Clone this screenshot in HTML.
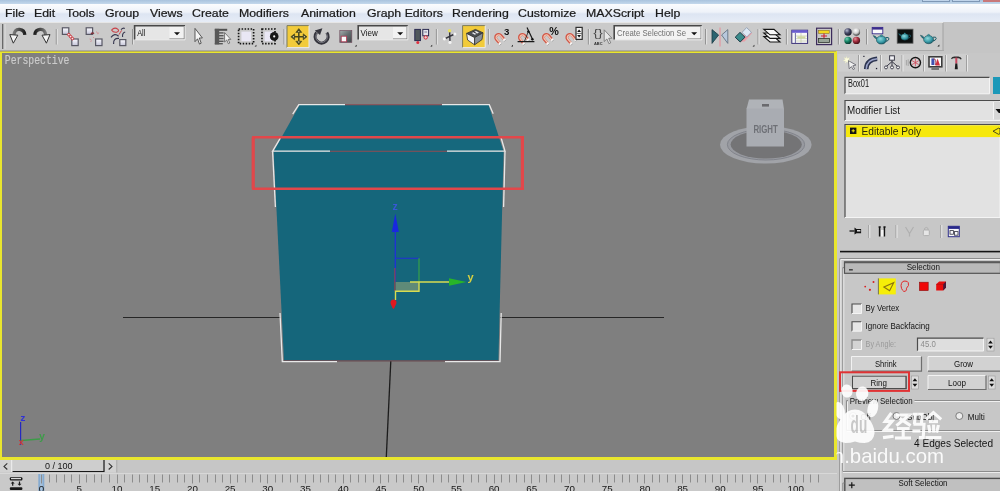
<!DOCTYPE html>
<html><head><meta charset="utf-8">
<style>
html,body{margin:0;padding:0;}
body{width:1000px;height:491px;overflow:hidden;position:relative;background:#c6c6c6;font-family:"Liberation Sans",sans-serif;}
.a{position:absolute;}
svg{will-change:transform;}
#menu{will-change:transform;}
.t{position:absolute;white-space:nowrap;line-height:1;}
#title{left:0;top:0;width:1000px;height:4px;background:linear-gradient(#a9c3de,#c4d8ec);}
#menu{left:0;top:4px;width:1000px;height:18px;background:linear-gradient(#fbfcfe 0%,#eef2f9 45%,#dde5f2 55%,#e6ecf6 100%);}
#menu .t{top:3px;font-size:12.5px;color:#1a1a1a;-webkit-text-stroke:0.25px #1a1a1a;transform:scale(0.985,0.93);transform-origin:0 100%;}
#tb{left:0;top:22px;width:943px;height:27.6px;background:#cacaca;border-top:1px solid #e6e6e6;box-sizing:border-box;}
#tbr{left:943px;top:22px;width:57px;height:31px;background:#c5c5c5;}
#vp{left:0;top:50px;width:836.7px;height:410px;background:#e9e62e;}
#vpt{left:0;top:50.4px;width:836px;height:1.5px;background:#bcb54c;}
#tbb{left:0;top:49.5px;width:943.5px;height:1px;background:#a9a9a9;}
#vpin{left:2.4px;top:53.2px;width:831.9px;height:404.2px;background:#7f7f7f;}
#panel{left:837px;top:53px;width:163px;height:438px;background:#c7c7c7;}
#bot{left:0;top:460px;width:837px;height:31px;background:#c8c8c8;}
</style></head><body>
<div id="title" class="a"></div>
<div class="a" style="left:922px;top:0;width:28px;height:2px;border:1px solid #7e97b5;border-top:none;box-sizing:border-box;background:#c0d4ea"></div><div class="a" style="left:952px;top:0;width:28px;height:2px;border:1px solid #7e97b5;border-top:none;box-sizing:border-box;background:#c0d4ea"></div><div class="a" style="left:983px;top:0;width:17px;height:2px;background:#c8787a"></div>
<div id="menu" class="a">
<span class="t" style="left:5px">File</span>
<span class="t" style="left:34px">Edit</span>
<span class="t" style="left:66px">Tools</span>
<span class="t" style="left:105px">Group</span>
<span class="t" style="left:150px">Views</span>
<span class="t" style="left:192px">Create</span>
<span class="t" style="left:239px">Modifiers</span>
<span class="t" style="left:301px">Animation</span>
<span class="t" style="left:367px">Graph Editors</span>
<span class="t" style="left:452px">Rendering</span>
<span class="t" style="left:518px">Customize</span>
<span class="t" style="left:586px">MAXScript</span>
<span class="t" style="left:655px">Help</span>
</div>
<div id="tb" class="a"></div>
<div id="tbr" class="a"></div>
<div id="vp" class="a"></div>
<div id="vpt" class="a"></div>
<div id="tbb" class="a"></div>
<div id="vpin" class="a"></div>
<svg class="a" style="left:0;top:0" width="1000" height="491" viewBox="0 0 1000 491">
<!-- grid lines -->
<line x1="123" y1="317.5" x2="281" y2="317.5" stroke="#262626" stroke-width="1"/>
<line x1="500" y1="317.5" x2="664" y2="317.5" stroke="#262626" stroke-width="1"/>
<line x1="390.8" y1="361" x2="386.3" y2="457" stroke="#1c1c1c" stroke-width="1.3"/>
<!-- box -->
<polygon points="299.6,105 488.6,105 503.6,151.4 273.6,151.4" fill="#16687d"/>
<polygon points="273.6,151.4 503.6,151.4 498.4,360.4 284,360.4" fill="#15667b"/>
<line x1="284" y1="360.8" x2="498.4" y2="360.8" stroke="#6a4a50" stroke-width="1.2"/>
<!-- selected edges (dark red) -->
<line x1="345" y1="104.8" x2="442" y2="104.8" stroke="#8a4a52" stroke-width="1.1"/>
<line x1="330" y1="151.3" x2="447" y2="151.3" stroke="#8a4a52" stroke-width="1.1"/>
<!-- selection brackets -->
<g fill="none" stroke="#e8e8e8" stroke-width="1.3">
<polyline points="345,104.7 298.8,104.7 292.7,114.2"/>
<polyline points="442,104.7 489.3,104.7 493.2,113.8"/>
<polyline points="330,151.2 272.6,151.2 280.3,138.2"/>
<polyline points="272.6,151.2 275.4,207"/>
<polyline points="447,151.2 505,151.2 501,137.5"/>
<polyline points="505,151.2 503.6,207"/>
<polyline points="337,361.6 282.3,361.6 280,313"/>
<polyline points="445,361.6 500,361.6 501.2,313"/>
</g>
<!-- red annotation rect -->
<path d="M252,137.3 H524 M252,188.7 H524" stroke="#e2474a" stroke-width="2.4" fill="none"/><path d="M253.2,137.3 V188.7 M522.4,137.3 V188.7" stroke="#e2474a" stroke-width="3.2" fill="none"/>
<!-- gizmo -->
<rect x="395.5" y="282" width="23.5" height="9" fill="#5f8a78"/>
<line x1="395.3" y1="230" x2="395.3" y2="282" stroke="#2030d8" stroke-width="1.3"/>
<polygon points="395.3,213.5 391.8,232 398.8,232" fill="#1828e0"/>
<line x1="395" y1="258.3" x2="419" y2="258.3" stroke="#2038c8" stroke-width="1.2"/>
<line x1="419" y1="258.3" x2="419" y2="282" stroke="#38a048" stroke-width="1.2"/>
<line x1="394.8" y1="268" x2="394.8" y2="291" stroke="#7a4a58" stroke-width="1.4"/>
<polyline points="410,282 451,282" fill="none" stroke="#d8dc50" stroke-width="1.4"/>
<polyline points="419,282 419,291.3 395.5,291.3 395.5,300" fill="none" stroke="#d8dc50" stroke-width="1.4"/>
<polygon points="466.5,282 449,278.2 449,285.8" fill="#28b428"/>
<path d="M391.2,300.5 q2.2,-2 4.6,0 q1.6,2 -0.6,5.5 q-1,2.6 -1.8,3 q-1,-0.6 -1.8,-3 q-2,-3.5 -0.4,-5.5z" fill="#e01820"/>
<text x="392.5" y="210" font-family="Liberation Sans" font-weight="bold" font-size="10.5" fill="#3858d8">z</text>
<text x="467.5" y="280.5" font-family="Liberation Sans" font-weight="bold" font-size="11" fill="#d8d040">y</text>
<!-- corner tripod -->
<line x1="20.6" y1="422" x2="20.6" y2="445" stroke="#2428c0" stroke-width="1.2"/>
<line x1="21" y1="440.5" x2="40" y2="439" stroke="#3c9c48" stroke-width="1.4"/>
<text x="20.3" y="421" font-family="Liberation Mono" font-weight="bold" font-size="9" fill="#3030d8">z</text>
<text x="39" y="439.5" font-family="Liberation Mono" font-weight="bold" font-size="10" fill="#3c9c48">y</text>
<text x="18.6" y="444.5" font-family="Liberation Mono" font-weight="bold" font-size="9" fill="#d03838">x</text>
<text x="4.8" y="63.8" font-family="Liberation Mono" font-size="12" fill="#cccccc" stroke="#cccccc" stroke-width="0.15" textLength="64.6" lengthAdjust="spacingAndGlyphs">Perspective</text>
<!-- viewcube -->
<ellipse cx="765.8" cy="144.8" rx="45.8" ry="18.8" fill="#a1a3a8"/>
<ellipse cx="766" cy="144.6" rx="38.6" ry="15.4" fill="#989aa0" stroke="#7e8088" stroke-width="0.9"/><ellipse cx="766.2" cy="144.5" rx="35.6" ry="14" fill="#747476"/>
<polygon points="749,99.5 782.5,99.5 784,109 746.5,109" fill="#b0b3b8"/>
<rect x="746.5" y="108.5" width="37.5" height="38" fill="#a9acb2"/>
<rect x="762" y="104" width="7" height="2.6" fill="#6a6a6e"/>
<text x="753.4" y="132.6" font-family="Liberation Sans" font-weight="bold" font-size="10.2" fill="#6e7076" textLength="24.4" lengthAdjust="spacingAndGlyphs">RIGHT</text>
</svg>
<div id="panel" class="a"></div>
<div id="bot" class="a"></div>
<!--TB-->
<svg class="a" style="left:0;top:0" width="1000" height="54" viewBox="0 0 1000 54" font-family="Liberation Sans">
<defs><linearGradient id="arc" x1="0" y1="0" x2="1" y2="0"><stop offset="0" stop-color="#7a7a7a"/><stop offset="1" stop-color="#1e1e1e"/></linearGradient><linearGradient id="arc2" x1="1" y1="0" x2="0" y2="0"><stop offset="0" stop-color="#7a7a7a"/><stop offset="1" stop-color="#1e1e1e"/></linearGradient><linearGradient id="scg" x1="0" y1="0" x2="1" y2="1"><stop offset="0" stop-color="#a4acac"/><stop offset="0.5" stop-color="#646c6e"/><stop offset="1" stop-color="#40484a"/></linearGradient><linearGradient id="bx" x1="0" y1="0" x2="0" y2="1"><stop offset="0" stop-color="#fafafe"/><stop offset="1" stop-color="#c4c4d8"/></linearGradient><radialGradient id="sN" cx="0.35" cy="0.3" r="0.7"><stop offset="0" stop-color="#b8bcd0"/><stop offset="0.5" stop-color="#484a68"/><stop offset="1" stop-color="#1a1a2c"/></radialGradient><radialGradient id="sW" cx="0.4" cy="0.3" r="0.7"><stop offset="0" stop-color="#ffffff"/><stop offset="0.55" stop-color="#d0d0d0"/><stop offset="1" stop-color="#404040"/></radialGradient><radialGradient id="sG" cx="0.35" cy="0.3" r="0.7"><stop offset="0" stop-color="#7ad0b8"/><stop offset="0.5" stop-color="#188868"/><stop offset="1" stop-color="#0a3a30"/></radialGradient><radialGradient id="sR" cx="0.35" cy="0.3" r="0.7"><stop offset="0" stop-color="#e09098"/><stop offset="0.5" stop-color="#a83040"/><stop offset="1" stop-color="#481018"/></radialGradient><radialGradient id="tp" cx="0.4" cy="0.35" r="0.7"><stop offset="0" stop-color="#8fd8dc"/><stop offset="0.6" stop-color="#3a9ca8"/><stop offset="1" stop-color="#145868"/></radialGradient></defs>
<rect x="2" y="24" width="3.6" height="25" fill="#b4b4b4"/><line x1="2.6" y1="24" x2="2.6" y2="49" stroke="#606060" stroke-width="1"/><line x1="5" y1="24" x2="5" y2="49" stroke="#ececec" stroke-width="1"/>
<path d="M13.8,36 Q14.2,28.8 19.6,29.4 Q24.4,30 24.8,34.8" fill="none" stroke="url(#arc)" stroke-width="3.3"/><polygon points="9.8,34.6 17.8,35.2 13.3,43.2" fill="#f4f4f4" stroke="#303030" stroke-width="1"/>
<path d="M45.8,36 Q45.4,28.8 40,29.4 Q35.2,30 34.8,34.8" fill="none" stroke="url(#arc2)" stroke-width="3.3"/><polygon points="50,34.6 42,35.2 46.4,43.2" fill="#f4f4f4" stroke="#303030" stroke-width="1"/>
<line x1="56.3" y1="29" x2="56.3" y2="44.5" stroke="#8e8e8e" stroke-width="1"/><line x1="57.3" y1="29" x2="57.3" y2="44.5" stroke="#e4e4e4" stroke-width="1"/>
<rect x="62.4" y="27.8" width="6.4" height="6.6" fill="url(#bx)" stroke="#585864" stroke-width="1.2"/><rect x="71.8" y="39" width="6.4" height="6.6" fill="url(#bx)" stroke="#585864" stroke-width="1.2"/><g fill="#f4e8e8" stroke="#c83038" stroke-width="1"><circle cx="68.8" cy="34.6" r="1.3"/><circle cx="70.6" cy="36.6" r="1.3"/><circle cx="72.4" cy="38.6" r="1.3"/></g>
<rect x="86.2" y="27.8" width="6.4" height="6.6" fill="url(#bx)" stroke="#585864" stroke-width="1.2"/><rect x="95.6" y="39" width="6.4" height="6.6" fill="url(#bx)" stroke="#585864" stroke-width="1.2"/><path d="M91,34 q1.6,-1.8 3,-0.4" fill="none" stroke="#803038" stroke-width="1.3"/><path d="M96.5,31.5 l1,2 M98.6,32.6 l-0.8,1.6 M89.6,39 l1.6,0.6 M90.4,41.4 l1.4,-0.6 M93,37 l1.2,1.2" fill="none" stroke="#d88088" stroke-width="0.8"/>
<path d="M111.6,30 q3,-3.4 6.4,-0.6 q1.6,2 -1.4,2.8 q-3.6,0.4 -5,-2.2z" fill="none" stroke="#c84048" stroke-width="1.1"/><path d="M111,37.4 q3.6,-5 7.6,-1.2" fill="none" stroke="#383850" stroke-width="1.2"/><path d="M113.6,44 q-0.6,-6 5.4,-5.6" fill="none" stroke="#383850" stroke-width="1.2"/><path d="M121,29.6 q2,-2 3.8,-1.2 M122.6,37 q-0.6,-4 2.6,-5" fill="none" stroke="#383850" stroke-width="1.1"/><path d="M119,34.6 q1.6,-2.6 2.6,-4.2" fill="none" stroke="#c84048" stroke-width="1"/><rect x="119.8" y="39.6" width="6" height="6" fill="url(#bx)" stroke="#585864" stroke-width="1.2"/>
<line x1="132.6" y1="29" x2="132.6" y2="44.5" stroke="#8e8e8e" stroke-width="1"/><line x1="133.6" y1="29" x2="133.6" y2="44.5" stroke="#e4e4e4" stroke-width="1"/>
<rect x="134.6" y="25.6" width="50.400000000000006" height="14" fill="#e6e6e6"/><rect x="169.4" y="26.8" width="14.999999999999995" height="12.2" fill="#f2f2f2"/><polyline points="169.4,39 184.4,39 184.4,27" fill="none" stroke="#707070" stroke-width="1.2"/><polyline points="134.6,39.6 134.6,25.8 185,25.8" fill="none" stroke="#484848" stroke-width="1.6"/><polyline points="185,26.4 185,39.8 135.4,39.8" fill="none" stroke="#f0f0f0" stroke-width="1"/><polygon points="174.0,32.2 180.0,32.2 177.0,35.2" fill="#101010"/><text x="137.2" y="36.4" font-size="9" fill="#141414" textLength="8.2" lengthAdjust="spacingAndGlyphs">All</text>
<path transform="translate(195,28.4) scale(0.86,1.02)" d="M0,0 V13 L3,10.2 L5.2,15.4 L7.2,14.5 L5,9.4 H8.6Z" fill="#f4f4f4" stroke="#404040" stroke-width="0.9" stroke-linejoin="round"/>
<rect x="214.8" y="28.8" width="12.4" height="2" fill="#505050"/><rect x="214.8" y="28.8" width="4.4" height="15.6" fill="#585858"/><rect x="219" y="32.2" width="4.6" height="1.4" fill="#585858"/><rect x="219" y="35" width="4.6" height="1.4" fill="#585858"/><rect x="219" y="37.8" width="4.6" height="1.4" fill="#585858"/><rect x="219" y="40.6" width="4.6" height="1.4" fill="#585858"/><rect x="214.8" y="43" width="8" height="1.4" fill="#585858"/><path transform="translate(224.6,32.6) scale(0.72)" d="M0,0 V13 L3,10.2 L5.2,15.4 L7.2,14.5 L5,9.4 H8.6Z" fill="#f4f4f4" stroke="#404040" stroke-width="0.9" stroke-linejoin="round"/>

<rect x="238.6" y="29" width="15" height="14.6" fill="none" stroke="#141414" stroke-width="1.7" stroke-dasharray="1.5 1.5"/><rect x="241.4" y="31.6" width="9.6" height="9.6" fill="#e9e7f4"/><polygon points="256.4,44.800000000000004 256.4,46.6 254.59999999999997,46.6" fill="#141414"/>
<rect x="262" y="29" width="13" height="14.6" fill="none" stroke="#141414" stroke-width="1.7" stroke-dasharray="1.5 1.5"/><rect x="264.6" y="31.6" width="8" height="9.6" fill="#e9e7f4"/><circle cx="274.2" cy="36.4" r="4.3" fill="#181818"/><circle cx="274.2" cy="36.4" r="1.1" fill="#f0f0f0"/>
<line x1="284" y1="29" x2="284" y2="44.5" stroke="#8e8e8e" stroke-width="1"/><line x1="285" y1="29" x2="285" y2="44.5" stroke="#e4e4e4" stroke-width="1"/>
<rect x="287" y="25.6" width="22" height="22" fill="#f2cb3a"/><polyline points="287,47.6 287,25.6 309,25.6" fill="none" stroke="#7c7c5c" stroke-width="1"/><polyline points="309,25.6 309,47.6 287,47.6" fill="none" stroke="#ececec" stroke-width="1"/><g stroke="#46461e" fill="#46461e"><path d="M298.8,30.5 V43 M292.6,36.8 H305" stroke-width="1.5"/><polygon points="298.8,28.6 295.8,32.4 301.8,32.4" stroke-width="0.6"/><polygon points="298.8,45 295.8,41.2 301.8,41.2" stroke-width="0.6"/><polygon points="290.8,36.8 294.6,33.8 294.6,39.8" stroke-width="0.6"/><polygon points="307,36.8 303.2,33.8 303.2,39.8" stroke-width="0.6"/></g><circle cx="298.8" cy="42" r="0.8" fill="#d8d8b0"/><circle cx="293.4" cy="36.8" r="0.7" fill="#d8d8b0"/><circle cx="304.4" cy="36.8" r="0.7" fill="#d8d8b0"/><circle cx="298.8" cy="31.6" r="0.7" fill="#d8d8b0"/>
<path d="M326.8,32.6 A6.5,6.5 0 1 1 316.6,32.4" fill="none" stroke="#34343c" stroke-width="3.2"/><path d="M326.4,33.4 A5.8,5.8 0 1 1 317,33.2" fill="none" stroke="#8c8c94" stroke-width="0.8"/><polygon points="314.8,30.6 322.4,28.2 320,35" fill="#34343c"/>
<rect x="339.8" y="30.6" width="12" height="11.8" fill="url(#scg)"/><rect x="341.2" y="36.2" width="5.4" height="5.6" fill="#fafafa" stroke="#b04058" stroke-width="0.9"/><rect x="339.8" y="30.6" width="12" height="11.8" fill="none" stroke="#705060" stroke-width="0.7"/><polygon points="356.6,44.800000000000004 356.6,46.6 354.8,46.6" fill="#141414"/>
<rect x="358.2" y="25.6" width="49.60000000000002" height="14" fill="#e6e6e6"/><rect x="393" y="26.8" width="14.200000000000012" height="12.2" fill="#f2f2f2"/><polyline points="393,39 407.2,39 407.2,27" fill="none" stroke="#707070" stroke-width="1.2"/><polyline points="358.2,39.6 358.2,25.8 407.8,25.8" fill="none" stroke="#484848" stroke-width="1.6"/><polyline points="407.8,26.4 407.8,39.8 359.0,39.8" fill="none" stroke="#f0f0f0" stroke-width="1"/><polygon points="397.2,32.2 403.2,32.2 400.2,35.2" fill="#101010"/><text x="360.6" y="36.4" font-size="9" fill="#141414" textLength="17.2" lengthAdjust="spacingAndGlyphs">View</text>
<rect x="414.8" y="29.4" width="5.6" height="11.2" fill="#50585a" stroke="#2a2a50" stroke-width="1"/><circle cx="417.8" cy="42.6" r="1.5" fill="#e03040"/><rect x="422.8" y="29.4" width="5.8" height="6.4" fill="#e4e4ec" stroke="#2a2a50" stroke-width="1"/><circle cx="425.7" cy="37.4" r="1.7" fill="#f0d0d0" stroke="#d02838" stroke-width="1"/><rect x="424.4" y="31" width="2.6" height="2" fill="#b0b0c0"/><polygon points="432.2,44.800000000000004 432.2,46.6 430.4,46.6" fill="#141414"/>
<line x1="436.4" y1="29" x2="436.4" y2="44.5" stroke="#8e8e8e" stroke-width="1"/><line x1="437.4" y1="29" x2="437.4" y2="44.5" stroke="#e4e4e4" stroke-width="1"/>
<path d="M449.6,31 L450,42 M444.6,38.8 L454.6,34" stroke="#34343c" stroke-width="1.4"/><circle cx="449.6" cy="30.8" r="1.7" fill="#e8e060"/><circle cx="454.8" cy="34" r="1.6" fill="#f4f4f4"/><circle cx="444.4" cy="38.8" r="1.6" fill="#f4f4f4"/><circle cx="450" cy="42.4" r="1.6" fill="#f4f4f4"/>
<rect x="462.6" y="25.6" width="22.6" height="22" fill="#f2cb3a"/><polyline points="462.6,47.6 462.6,25.6 485.2,25.6" fill="none" stroke="#7c7c5c" stroke-width="1"/><polyline points="485.2,25.6 485.2,47.6 462.6,47.6" fill="none" stroke="#ececec" stroke-width="1"/><polygon points="466.6,33.4 475.4,29.4 483,32.8 474.6,37.6" fill="#4a4e54" stroke="#303030" stroke-width="0.8"/><polygon points="466.6,33.4 474.6,37.6 474.6,44.8 467.6,40" fill="#f2f2f6" stroke="#303030" stroke-width="0.8"/><polygon points="474.6,37.6 483,32.8 482,39.6 474.6,44.8" fill="#8a9098" stroke="#303030" stroke-width="0.8"/><polygon points="471.8,33 476,31 479,32.6 474.8,34.8" fill="#e8e8ec"/><path d="M473.2,31.6 l3.4,1.9" stroke="#202020" stroke-width="1"/>
<line x1="488.4" y1="29" x2="488.4" y2="44.5" stroke="#8e8e8e" stroke-width="1"/><line x1="489.4" y1="29" x2="489.4" y2="44.5" stroke="#e4e4e4" stroke-width="1"/>
<g transform="translate(498.6,37.4) rotate(-40)"><path d="M-3,5.4 V0 A3,3 0 0 1 3,0 V5.4" fill="none" stroke="#d25646" stroke-width="2.8"/><path d="M-2.5,5.4 V0 A2.5,2.5 0 0 1 2.5,0 V5.4" fill="none" stroke="#f2c8b4" stroke-width="1.2"/><rect x="-4.4" y="4.6" width="2.8" height="2" fill="#f6f6f6"/><rect x="1.6" y="4.6" width="2.8" height="2" fill="#f6f6f6"/><path d="M-4.4,6.7 h2.8 M1.6,6.7 h2.8" stroke="#808080" stroke-width="0.5"/></g>
<text x="504" y="34.9" font-size="8.4" font-weight="bold" fill="#101010" textLength="5.4" lengthAdjust="spacingAndGlyphs">3</text><polygon points="513,44.800000000000004 513,46.6 511.2,46.6" fill="#141414"/>
<g transform="translate(522.4,37.4) rotate(-40)"><path d="M-3,5.4 V0 A3,3 0 0 1 3,0 V5.4" fill="none" stroke="#d25646" stroke-width="2.8"/><path d="M-2.5,5.4 V0 A2.5,2.5 0 0 1 2.5,0 V5.4" fill="none" stroke="#f2c8b4" stroke-width="1.2"/><rect x="-4.4" y="4.6" width="2.8" height="2" fill="#f6f6f6"/><rect x="1.6" y="4.6" width="2.8" height="2" fill="#f6f6f6"/><path d="M-4.4,6.7 h2.8 M1.6,6.7 h2.8" stroke="#808080" stroke-width="0.5"/></g>
<path d="M527,27.6 L532.9,40 M517.6,41.6 H534.4" stroke="#181818" stroke-width="1.2" fill="none"/><path d="M524.6,41 L528.4,31.4" stroke="#181818" stroke-width="0.8"/><circle cx="528.3" cy="31.6" r="1.2" fill="#101010"/><circle cx="532.4" cy="39.2" r="1.2" fill="#101010"/>
<g transform="translate(546.4,37.4) rotate(-40)"><path d="M-3,5.4 V0 A3,3 0 0 1 3,0 V5.4" fill="none" stroke="#d25646" stroke-width="2.8"/><path d="M-2.5,5.4 V0 A2.5,2.5 0 0 1 2.5,0 V5.4" fill="none" stroke="#f2c8b4" stroke-width="1.2"/><rect x="-4.4" y="4.6" width="2.8" height="2" fill="#f6f6f6"/><rect x="1.6" y="4.6" width="2.8" height="2" fill="#f6f6f6"/><path d="M-4.4,6.7 h2.8 M1.6,6.7 h2.8" stroke="#808080" stroke-width="0.5"/></g>
<text x="549.2" y="35.4" font-size="10.4" font-weight="bold" fill="#101010" textLength="9.6" lengthAdjust="spacingAndGlyphs">%</text>
<g transform="translate(569.8,37.4) rotate(-40)"><path d="M-3,5.4 V0 A3,3 0 0 1 3,0 V5.4" fill="none" stroke="#d25646" stroke-width="2.8"/><path d="M-2.5,5.4 V0 A2.5,2.5 0 0 1 2.5,0 V5.4" fill="none" stroke="#f2c8b4" stroke-width="1.2"/><rect x="-4.4" y="4.6" width="2.8" height="2" fill="#f6f6f6"/><rect x="1.6" y="4.6" width="2.8" height="2" fill="#f6f6f6"/><path d="M-4.4,6.7 h2.8 M1.6,6.7 h2.8" stroke="#808080" stroke-width="0.5"/></g>
<rect x="576" y="27.4" width="6.2" height="12" fill="#f4f4f4" stroke="#303030" stroke-width="1.2"/><polygon points="579.1,29.4 577.2,32 581,32" fill="#101010"/><polygon points="579.1,37.6 577.2,35 581,35" fill="#101010"/><line x1="576" y1="33.5" x2="582.2" y2="33.5" stroke="#606060" stroke-width="0.8"/>
<line x1="588.4" y1="29" x2="588.4" y2="44.5" stroke="#8e8e8e" stroke-width="1"/><line x1="589.4" y1="29" x2="589.4" y2="44.5" stroke="#e4e4e4" stroke-width="1"/>
<text x="593.2" y="37.4" font-size="11" fill="#4a4a4a" textLength="9.6" lengthAdjust="spacingAndGlyphs">{}</text><text x="594" y="44.6" font-size="4.4" font-weight="bold" fill="#303030" textLength="8.6" lengthAdjust="spacingAndGlyphs">ABC</text><path transform="translate(604.2,29.8) scale(0.9)" d="M0,0 V13 L3,10.2 L5.2,15.4 L7.2,14.5 L5,9.4 H8.6Z" fill="#e8e8e8" stroke="#707070" stroke-width="0.9" stroke-linejoin="round"/>

<rect x="614.2" y="25.6" width="87.59999999999991" height="14" fill="#f2f2f2"/><rect x="687" y="26.8" width="14.199999999999955" height="12.2" fill="#f2f2f2"/><polyline points="687,39 701.1999999999999,39 701.1999999999999,27" fill="none" stroke="#707070" stroke-width="1.2"/><polyline points="614.2,39.6 614.2,25.8 701.8,25.8" fill="none" stroke="#484848" stroke-width="1.6"/><polyline points="701.8,26.4 701.8,39.8 615.0,39.8" fill="none" stroke="#f0f0f0" stroke-width="1"/><polygon points="691.1999999999999,32.2 697.1999999999999,32.2 694.1999999999999,35.2" fill="#101010"/><text x="617" y="36" font-size="9.2" fill="#707070" textLength="69" lengthAdjust="spacingAndGlyphs">Create Selection Se</text>
<line x1="705.6" y1="29" x2="705.6" y2="44.5" stroke="#8e8e8e" stroke-width="1"/><line x1="706.6" y1="29" x2="706.6" y2="44.5" stroke="#e4e4e4" stroke-width="1"/>
<line x1="720" y1="27.6" x2="720" y2="46.4" stroke="#e09aa2" stroke-width="1.3"/><polygon points="712,29.6 712,43.4 718.6,35" fill="#2a6470" stroke="#1c3a44" stroke-width="0.8"/><polygon points="727.8,29.6 727.8,43.4 721.6,35" fill="#b8c8dc" stroke="#586878" stroke-width="0.8"/>
<polygon points="747.2,28.4 752,33.2 744.6,41.4 740,41.8" fill="#e8a0a8"/><polygon points="746.6,27.6 751.4,32.2 746.8,37 742,32.4" fill="#dce8f4" stroke="#8090a8" stroke-width="0.7"/><polygon points="740,32.4 745,37.2 740.2,42 735.2,37.2" fill="#3a8c8c" stroke="#1c3a44" stroke-width="1"/><polygon points="754.4,44.800000000000004 754.4,46.6 752.6,46.6" fill="#141414"/>
<line x1="758" y1="29" x2="758" y2="44.5" stroke="#8e8e8e" stroke-width="1"/><line x1="759" y1="29" x2="759" y2="44.5" stroke="#e4e4e4" stroke-width="1"/>
<polygon points="763.8,36.6 774,36.6 780,42.0 770,42.0" fill="#f8f8f8" stroke="#141414" stroke-width="1.1"/><polygon points="763.8,33 774,33 780,38.4 770,38.4" fill="#f8f8f8" stroke="#141414" stroke-width="1.1"/><polygon points="763.8,29.4 774,29.4 780,34.8 770,34.8" fill="#f8f8f8" stroke="#141414" stroke-width="1.1"/>
<line x1="786.4" y1="29" x2="786.4" y2="44.5" stroke="#8e8e8e" stroke-width="1"/><line x1="787.4" y1="29" x2="787.4" y2="44.5" stroke="#e4e4e4" stroke-width="1"/>
<rect x="791.8" y="30.2" width="15.8" height="13.2" fill="#f8f8f8" stroke="#3a3078" stroke-width="1"/><rect x="791.8" y="30.2" width="15.8" height="2.6" fill="#6a5cd0"/><line x1="795.4" y1="33" x2="795.4" y2="43" stroke="#5a5a9a" stroke-width="0.9"/><path d="M796,36 H807 M796,38.6 H807 M796,41 H807 M801,33 V43" stroke="#b8c498" stroke-width="0.6"/><rect x="797.4" y="36.4" width="8" height="2" fill="#d0d8a0"/>
<rect x="816.6" y="28.2" width="15" height="16.4" fill="#c8c8c8" stroke="#3c2c5c" stroke-width="1.2"/><rect x="818.6" y="30.4" width="10.6" height="3" fill="#f4d820" stroke="#806010" stroke-width="0.5"/><path d="M824,33.6 V38.6 M821,36 H827" stroke="#d02030" stroke-width="1.1"/><rect x="818.6" y="38.6" width="10.8" height="3.8" fill="#98a498" stroke="#303830" stroke-width="0.8"/>
<line x1="838.4" y1="29" x2="838.4" y2="44.5" stroke="#8e8e8e" stroke-width="1"/><line x1="839.4" y1="29" x2="839.4" y2="44.5" stroke="#e4e4e4" stroke-width="1"/>
<circle cx="848" cy="32" r="3.7" fill="url(#sN)"/><circle cx="856.4" cy="32" r="3.7" fill="url(#sW)"/><circle cx="848" cy="40.4" r="3.7" fill="url(#sG)"/><circle cx="856.4" cy="40.4" r="3.7" fill="url(#sR)"/>
<line x1="866.6" y1="29" x2="866.6" y2="44.5" stroke="#8e8e8e" stroke-width="1"/><line x1="867.6" y1="29" x2="867.6" y2="44.5" stroke="#e4e4e4" stroke-width="1"/>
<rect x="872.2" y="27.4" width="10.6" height="6.4" fill="#fafafa" stroke="#3a2c8c" stroke-width="0.9"/><rect x="872.2" y="27.4" width="10.6" height="2.2" fill="#3a2c8c"/><g transform="translate(881.4,39.8) scale(1.0)"><path d="M-4.2,-0.6 q-3,-0.8 -4,-3.6 q2.4,0.4 3.6,2.2" fill="#2a7c8c" stroke="#14444c" stroke-width="0.5"/><path d="M4.4,-2.2 q3.4,-0.8 3.2,1.4 q-0.4,2 -3.4,2.4" fill="none" stroke="#1c5c68" stroke-width="1"/><ellipse cx="0" cy="0.2" rx="5" ry="4.1" fill="url(#tp)" stroke="#14444c" stroke-width="0.5"/><ellipse cx="0" cy="-4.2" rx="1.1" ry="0.9" fill="#3a9ca8" stroke="#14444c" stroke-width="0.3"/></g>
<rect x="897.2" y="29.2" width="15.8" height="14" fill="#0c1010" stroke="#585858" stroke-width="0.8"/><g transform="translate(904.8,36.8) scale(0.78)"><path d="M-4.2,-0.6 q-3,-0.8 -4,-3.6 q2.4,0.4 3.6,2.2" fill="#2a7c8c" stroke="#14444c" stroke-width="0.5"/><path d="M4.4,-2.2 q3.4,-0.8 3.2,1.4 q-0.4,2 -3.4,2.4" fill="none" stroke="#1c5c68" stroke-width="1"/><ellipse cx="0" cy="0.2" rx="5" ry="4.1" fill="url(#tp)" stroke="#14444c" stroke-width="0.5"/><ellipse cx="0" cy="-4.2" rx="1.1" ry="0.9" fill="#3a9ca8" stroke="#14444c" stroke-width="0.3"/></g>
<g transform="translate(928.6,39.4) scale(1.0)"><path d="M-4.2,-0.6 q-3,-0.8 -4,-3.6 q2.4,0.4 3.6,2.2" fill="#2a7c8c" stroke="#14444c" stroke-width="0.5"/><path d="M4.4,-2.2 q3.4,-0.8 3.2,1.4 q-0.4,2 -3.4,2.4" fill="none" stroke="#1c5c68" stroke-width="1"/><ellipse cx="0" cy="0.2" rx="5" ry="4.1" fill="url(#tp)" stroke="#14444c" stroke-width="0.5"/><ellipse cx="0" cy="-4.2" rx="1.1" ry="0.9" fill="#3a9ca8" stroke="#14444c" stroke-width="0.3"/></g><polygon points="939.4,44.6 939.4,46.6 937.4,46.6" fill="#141414"/>
<line x1="943" y1="23" x2="943" y2="50" stroke="#a2a2a2" stroke-width="1"/></svg>
<!--/TB-->
<!--PANEL-->
<svg class="a" style="left:0;top:0" width="1000" height="491" viewBox="0 0 1000 491" font-family="Liberation Sans">
<rect x="838" y="54" width="129" height="17.6" fill="#cecece"/><rect x="859" y="54" width="21.4" height="17.6" fill="#d2d2d2"/><line x1="858.5" y1="55" x2="858.5" y2="71.5" stroke="#a0a0a0" stroke-width="1"/><line x1="859.5" y1="55" x2="859.5" y2="71.5" stroke="#e8e8e8" stroke-width="1"/><line x1="880.5" y1="55" x2="880.5" y2="71.5" stroke="#a0a0a0" stroke-width="1"/><line x1="881.5" y1="55" x2="881.5" y2="71.5" stroke="#e8e8e8" stroke-width="1"/><line x1="902" y1="55" x2="902" y2="71.5" stroke="#a0a0a0" stroke-width="1"/><line x1="903" y1="55" x2="903" y2="71.5" stroke="#e8e8e8" stroke-width="1"/><line x1="923.5" y1="55" x2="923.5" y2="71.5" stroke="#a0a0a0" stroke-width="1"/><line x1="924.5" y1="55" x2="924.5" y2="71.5" stroke="#e8e8e8" stroke-width="1"/><line x1="945.5" y1="55" x2="945.5" y2="71.5" stroke="#a0a0a0" stroke-width="1"/><line x1="946.5" y1="55" x2="946.5" y2="71.5" stroke="#e8e8e8" stroke-width="1"/><line x1="966.5" y1="55" x2="966.5" y2="71.5" stroke="#a0a0a0" stroke-width="1"/><line x1="967.5" y1="55" x2="967.5" y2="71.5" stroke="#e8e8e8" stroke-width="1"/>
<g>
<path transform="translate(846.6,59.6) scale(0.72) translate(-846.6,-60)" d="M846.6,55.6 l1,3 l3,-1.4 l-1.6,2.800 l3,1.200 l-3.200,0.600 l0.600,3.200 l-2.400,-2.200 l-2.200,2.400 l0.400,-3.200 l-3.200,-0.400 l2.800,-1.600 l-1.800,-2.800 l3,1.200z" fill="#fdfde0" stroke="#f0f0b0" stroke-width="0.3"/><path d="M848.4,60.6 l7.6,4.4 l-3.2,0.8 l1.8,3 l-1.4,0.8 l-1.8,-3 l-2.2,2.2z" fill="#f0f0f0" stroke="#606068" stroke-width="0.8" stroke-linejoin="round"/>
<path d="M866.2,69.2 Q866.6,59.6 877.2,58.8" fill="none" stroke="#2c3450" stroke-width="4.6"/><path d="M866.2,69.2 Q866.6,59.6 877.2,58.8" fill="none" stroke="#9aa2c8" stroke-width="1.4"/><rect x="863.3" y="55.8" width="1.2" height="1.2" fill="#202030"/><rect x="875.9" y="67.9" width="1.3" height="1.3" fill="#202030"/>
<path d="M892,59.8 V66 M892,61.6 L886.2,66.6 M892,61.6 L897.8,66.6" fill="none" stroke="#3a3a48" stroke-width="1"/><rect x="889.6" y="55.8" width="4.8" height="4.4" fill="#f4f4f8" stroke="#3a3a48" stroke-width="1"/><circle cx="886" cy="67.4" r="1.5" fill="#f4f4f4" stroke="#3a3a48" stroke-width="0.9"/><circle cx="892" cy="67.4" r="1.5" fill="#f4f4f4" stroke="#3a3a48" stroke-width="0.9"/><circle cx="898" cy="67.4" r="1.5" fill="#f4f4f4" stroke="#3a3a48" stroke-width="0.9"/>
<circle cx="915.4" cy="62.6" r="5.1" fill="#d4d0d0" stroke="#141414" stroke-width="1.4"/><path d="M915.4,58.8 V66.4 M912,60.6 L918.8,64.6 M912,64.6 L918.8,60.6" stroke="#d04858" stroke-width="0.8"/><path d="M906.4,60 V65.4 M908.2,59.4 V66" stroke="#9a9a9a" stroke-width="0.8"/>
<rect x="929" y="56.8" width="12.8" height="10" fill="#fafafa" stroke="#3c3c3c" stroke-width="1.6"/><rect x="931.4" y="58.4" width="3" height="6.6" fill="#4050b0"/><path d="M935.4,65.4 l2.2,-7 l2.4,7z" fill="#d03040"/><path d="M933.6,59 q3,-0.6 2,6" fill="none" stroke="#a02838" stroke-width="0.9"/><rect x="931.4" y="68.4" width="7.6" height="1.2" fill="#3c3c3c"/>
<path d="M951,58.4 q1,-2 3.4,-2 h4 q2.6,0.4 3.4,2.6 l-1.2,0.6 q-1,-1.6 -2.6,-1.4 h-4.6 q-1,0.2 -1.4,1z" fill="#2c2c2c"/><rect x="955.3" y="57.6" width="2" height="6" fill="#c84860"/><path d="M955.3,63.4 h2 l0.5,5.8 h-3z" fill="#1c1c1c"/>
</g>
<rect x="845" y="77.3" width="144.5" height="16.5" fill="#e4e4e4"/><polyline points="845,93.8 845,77.3 989.5,77.3" fill="none" stroke="#4c4c4c" stroke-width="1.2"/><polyline points="989.5,77.8 989.5,93.8 845,93.8" fill="none" stroke="#f4f4f4" stroke-width="1"/>
<text x="848" y="87.2" font-size="10.4" fill="#141414" textLength="21" lengthAdjust="spacingAndGlyphs">Box01</text>
<rect x="993" y="77" width="7" height="17" fill="#1c98b8"/>
<rect x="845" y="100.5" width="155" height="20" fill="#e2e2e2"/><polyline points="845,120.5 845,100.5 1000,100.5" fill="none" stroke="#4c4c4c" stroke-width="1.2"/><polyline points="1000,101.0 1000,120.5 845,120.5" fill="none" stroke="#f4f4f4" stroke-width="1"/>
<text x="847" y="113.9" font-size="11.2" fill="#141414" textLength="53" lengthAdjust="spacingAndGlyphs">Modifier List</text>
<rect x="993.5" y="102" width="6.5" height="17.5" fill="#d6d6d6"/><line x1="993.5" y1="102" x2="993.5" y2="119.5" stroke="#f4f4f4"/><polygon points="995.5,109 1000,109 1000,113 998.8,113" fill="#101010"/>
<rect x="845" y="124.5" width="155" height="93" fill="#e2e2e2"/><polyline points="845,217.5 845,124.5 1000,124.5" fill="none" stroke="#4c4c4c" stroke-width="1.2"/><polyline points="1000,125.0 1000,217.5 845,217.5" fill="none" stroke="#f4f4f4" stroke-width="1"/>
<rect x="846" y="125.3" width="154" height="11.8" fill="#f6e80c"/>
<rect x="850" y="127.6" width="6.4" height="6.4" fill="#141414"/><path d="M851.6,130.8h3.2M853.2,129.2v3.2" stroke="#f6e80c" stroke-width="1"/>
<text x="861.5" y="135" font-size="10.2" fill="#2a2a10" textLength="59.5" lengthAdjust="spacingAndGlyphs">Editable Poly</text>
<path d="M993,131.2 l5.5,-3 l1.5,0.5 v5 l-1.5,0.6z" fill="none" stroke="#3a3a20" stroke-width="0.9"/>
<g stroke="#141414" fill="#141414"><path d="M849.5,231 h5" stroke-width="1.3"/><path d="M854.5,227.6 v7 l2,-1.4 h4.6 v-4.2 h-4.6z" stroke="none"/><rect x="857" y="230" width="3.4" height="1.5" fill="#d8d8d8" stroke="none"/></g>
<line x1="868.8" y1="225" x2="868.8" y2="238" stroke="#9a9a9a"/><line x1="869.8" y1="225" x2="869.8" y2="238" stroke="#ececec"/><line x1="896" y1="225" x2="896" y2="238" stroke="#9a9a9a"/><line x1="897" y1="225" x2="897" y2="238" stroke="#ececec"/><line x1="940.8" y1="225" x2="940.8" y2="238" stroke="#9a9a9a"/><line x1="941.8" y1="225" x2="941.8" y2="238" stroke="#ececec"/>
<path d="M879.6,226.5 v10 M884.4,226.5 v10" stroke="#141414" stroke-width="1.5"/><rect x="881" y="230" width="2.4" height="6.5" fill="#f4f4f4"/><path d="M878.5,227 h2.4 M883.4,227 h2.4" stroke="#141414" stroke-width="1"/>
<path d="M905.5,227 l4,6.5 l4,-6.5 M909.5,233.5 v3" fill="none" stroke="#b0b0b0" stroke-width="1.2"/>
<rect x="923.3" y="230" width="6" height="5.6" rx="1" fill="#e6e6e6" stroke="#b0b0b0" stroke-width="1"/><path d="M924.6,230 v-1.6 q1.7,-2 3.4,0 v1.6" fill="none" stroke="#b0b0b0" stroke-width="1"/>
<rect x="948.3" y="226.3" width="11" height="10.4" fill="#f6f6fa" stroke="#30308a" stroke-width="1"/><rect x="948.3" y="226.3" width="11" height="2.6" fill="#28288a"/><rect x="950" y="230.6" width="3.4" height="3.6" fill="none" stroke="#303040" stroke-width="0.8"/><rect x="954.6" y="231.6" width="3.4" height="3.6" fill="none" stroke="#303040" stroke-width="0.8"/>
<rect x="840" y="250.8" width="160" height="1.6" fill="#141414"/>
<polyline points="839.8,491 839.8,258.5 1000,258.5" fill="none" stroke="#8c8c8c" stroke-width="1"/><polyline points="840.8,491 840.8,259.5 1000,259.5" fill="none" stroke="#f0f0f0" stroke-width="1"/>
<line x1="843" y1="471.5" x2="1000" y2="471.5" stroke="#8c8c8c"/><line x1="843" y1="472.5" x2="1000" y2="472.5" stroke="#ececec"/>
<polyline points="842.8,471.5 842.8,267.5 845,267.5" fill="none" stroke="#8c8c8c" stroke-width="1"/><polyline points="843.8,471 843.8,268.5" fill="none" stroke="#ececec" stroke-width="1"/>
<rect x="844.5" y="261.8" width="156" height="11.5" fill="#b9b9b9" stroke="#545454" stroke-width="1.2"/>
<line x1="844.5" y1="262.6" x2="1000" y2="262.6" stroke="#5a5a5a" stroke-width="1.2"/><rect x="849" y="269.3" width="3.8" height="1.1" fill="#141414"/>
<text x="906.7" y="270.4" font-size="8.6" fill="#141414" textLength="33.2" lengthAdjust="spacingAndGlyphs">Selection</text>
<g fill="#d82020"><circle cx="873.5" cy="281.9" r="1"/><circle cx="865.2" cy="286.6" r="0.9"/><circle cx="869.9" cy="289.8" r="1.1"/></g>
<rect x="878.4" y="278.4" width="17.4" height="16" fill="#f6ee08"/><line x1="878.4" y1="278.4" x2="878.4" y2="294.4" stroke="#6a6a50" stroke-width="0.9"/><polygon points="883.9,287 893.7,282.7 889.6,290.8" fill="none" stroke="#8a7410" stroke-width="1.1"/>
<path d="M906,281.2 q-4.5,-1 -5,4.5 q0.3,3 1.5,4.5 q1.2,2 3,1 q1.3,-1 1,-3 q3,-2.5 1.8,-5.5 q-0.8,-1.5 -2.3,-1.5z" fill="none" stroke="#e02a2a" stroke-width="1"/>
<rect x="919.4" y="282.2" width="8.8" height="8.4" fill="#f00808" stroke="#8a1010" stroke-width="0.6"/>
<polygon points="936.2,284.3 939.2,281.5 946,281.5 946,287.6 943.2,290.6 936.2,290.6" fill="#e80c0c"/><polygon points="943.2,284.3 946,281.5 946,287.6 943.2,290.6" fill="#4a1838"/><polyline points="936.2,284.3 943.2,284.3" stroke="#a01010" stroke-width="0.6"/>
<rect x="852" y="304" width="9.5" height="9.5" fill="#e6e6e6"/><polyline points="852,313.5 852,304 861.5,304" fill="none" stroke="#4a4a4a" stroke-width="1.1"/><polyline points="861.5,304 861.5,313.5 852,313.5" fill="none" stroke="#f4f4f4" stroke-width="1"/>
<text x="865.6" y="310.9" font-size="9.4" fill="#141414" textLength="33.6" lengthAdjust="spacingAndGlyphs">By Vertex</text>
<rect x="852" y="321.7" width="9.5" height="9.5" fill="#e6e6e6"/><polyline points="852,331.2 852,321.7 861.5,321.7" fill="none" stroke="#4a4a4a" stroke-width="1.1"/><polyline points="861.5,321.7 861.5,331.2 852,331.2" fill="none" stroke="#f4f4f4" stroke-width="1"/>
<text x="865.6" y="328.8" font-size="9.4" fill="#141414" textLength="64" lengthAdjust="spacingAndGlyphs">Ignore Backfacing</text>
<rect x="852" y="340" width="9.5" height="9.5" fill="#d4d4d4"/><polyline points="852,349.5 852,340 861.5,340" fill="none" stroke="#8a8a8a" stroke-width="1.3"/><polyline points="861.5,340 861.5,349.5 852,349.5" fill="none" stroke="#f4f4f4" stroke-width="1"/>
<text x="865.6" y="346.7" font-size="9.4" fill="#9a9a9a" textLength="30.4" lengthAdjust="spacingAndGlyphs">By Angle:</text>
<rect x="917.5" y="338.2" width="66" height="12.8" fill="#dedede"/><polyline points="917.5,351.0 917.5,338.2 983.5,338.2" fill="none" stroke="#4c4c4c" stroke-width="1.2"/><polyline points="983.5,338.7 983.5,351.0 917.5,351.0" fill="none" stroke="#f4f4f4" stroke-width="1"/>
<text x="920.6" y="346.7" font-size="9.4" fill="#8c8c8c" textLength="15.2" lengthAdjust="spacingAndGlyphs">45.0</text>
<rect x="987" y="338.2" width="7" height="12.8" fill="#dcdcdc" stroke="#9a9a9a" stroke-width="0.6"/><polygon points="990.5,340.4 988.1,343.4 992.9,343.4" fill="#101010"/><polygon points="990.5,348.8 988.1,345.8 992.9,345.8" fill="#101010"/>
<rect x="851.5" y="356.5" width="70" height="14.6" fill="#d2d2d2"/><polyline points="851.5,371.1 851.5,356.5 921.5,356.5" fill="none" stroke="#f2f2f2" stroke-width="1"/><polyline points="921.5,356.5 921.5,371.1 851.5,371.1" fill="none" stroke="#6e6e6e" stroke-width="1.2"/>
<text x="875" y="366.5" font-size="9.4" fill="#141414" textLength="21.7" lengthAdjust="spacingAndGlyphs">Shrink</text>
<rect x="928" y="356.5" width="73" height="14.6" fill="#d2d2d2"/><polyline points="928,371.1 928,356.5 1001,356.5" fill="none" stroke="#f2f2f2" stroke-width="1"/><polyline points="1001,356.5 1001,371.1 928,371.1" fill="none" stroke="#6e6e6e" stroke-width="1.2"/>
<text x="954" y="366.5" font-size="9.4" fill="#141414" textLength="19" lengthAdjust="spacingAndGlyphs">Grow</text>
<rect x="852.5" y="376.2" width="53.6" height="12.4" fill="#d2d2d2"/><polyline points="852.5,388.59999999999997 852.5,376.2 906.1,376.2" fill="none" stroke="#f2f2f2" stroke-width="1"/><polyline points="906.1,376.2 906.1,388.59999999999997 852.5,388.59999999999997" fill="none" stroke="#6e6e6e" stroke-width="1.2"/>
<rect x="852.5" y="376.2" width="53.6" height="12.4" fill="none" stroke="#4a4a4a" stroke-width="1"/><text x="870.6" y="385.8" font-size="9.4" fill="#141414" textLength="16.4" lengthAdjust="spacingAndGlyphs">Ring</text>
<rect x="911.5" y="376" width="6.8" height="13" fill="#dcdcdc" stroke="#9a9a9a" stroke-width="0.6"/><polygon points="914.9,378.2 912.5,381.2 917.3,381.2" fill="#101010"/><polygon points="914.9,386.8 912.5,383.8 917.3,383.8" fill="#101010"/>
<rect x="928" y="375.5" width="58" height="14" fill="#d2d2d2"/><polyline points="928,389.5 928,375.5 986,375.5" fill="none" stroke="#f2f2f2" stroke-width="1"/><polyline points="986,375.5 986,389.5 928,389.5" fill="none" stroke="#6e6e6e" stroke-width="1.2"/>
<text x="948" y="385.8" font-size="9.4" fill="#141414" textLength="18" lengthAdjust="spacingAndGlyphs">Loop</text>
<rect x="988.3" y="376" width="6.8" height="13" fill="#dcdcdc" stroke="#9a9a9a" stroke-width="0.6"/><polygon points="991.6999999999999,378.2 989.3,381.2 994.0999999999999,381.2" fill="#101010"/><polygon points="991.6999999999999,386.8 989.3,383.8 994.0999999999999,383.8" fill="#101010"/>
<polyline points="848,400.5 846.5,400.5 846.5,430.5 1000,430.5" fill="none" stroke="#8c8c8c" stroke-width="1"/><line x1="914.5" y1="400.5" x2="1000" y2="400.5" stroke="#8c8c8c"/><polyline points="847.5,401.5 847.5,429.5" fill="none" stroke="#f0f0f0"/><line x1="914.5" y1="401.5" x2="1000" y2="401.5" stroke="#f0f0f0"/><line x1="847" y1="431.5" x2="1000" y2="431.5" stroke="#f0f0f0"/>
<text x="849.7" y="403.8" font-size="9.4" fill="#141414" textLength="63" lengthAdjust="spacingAndGlyphs">Preview Selection</text>
<circle cx="853" cy="416" r="3.5" fill="#ececec" stroke="#707070" stroke-width="0.9"/><circle cx="853" cy="416" r="1.6" fill="#101010"/><text x="860.5" y="419.6" font-size="9.4" fill="#141414" textLength="10.5" lengthAdjust="spacingAndGlyphs">Off</text>
<circle cx="896.5" cy="416" r="3.5" fill="#ececec" stroke="#707070" stroke-width="0.9"/><text x="907" y="419.6" font-size="9.4" fill="#141414" textLength="27" lengthAdjust="spacingAndGlyphs">SubObj</text>
<circle cx="959.3" cy="416" r="3.5" fill="#ececec" stroke="#707070" stroke-width="0.9"/><text x="967.8" y="419.6" font-size="9.4" fill="#141414" textLength="17" lengthAdjust="spacingAndGlyphs">Multi</text>
<text x="914" y="446.6" font-size="10" fill="#141414" textLength="79" lengthAdjust="spacingAndGlyphs">4 Edges Selected</text>
<rect x="844.8" y="478.4" width="156" height="14" fill="#c0c0c0" stroke="#505050" stroke-width="1.4"/>
<polyline points="842.8,491 842.8,483 844.5,483" fill="none" stroke="#8c8c8c"/><path d="M848.8,485.2h6M851.8,482.2v6" stroke="#141414" stroke-width="1.2"/>
<text x="898.5" y="486" font-size="9.4" fill="#141414" textLength="49" lengthAdjust="spacingAndGlyphs">Soft Selection</text>
<rect x="840" y="372.3" width="69" height="18.6" fill="none" stroke="#e03234" stroke-width="2"/>
</svg>

<svg class="a" style="left:0;top:460px" width="837" height="31" viewBox="0 460 837 31">
<rect x="0" y="460" width="837" height="13" fill="#c6c6c6"/>
<rect x="0" y="473" width="837" height="18" fill="#c9c9c9"/>
<rect x="0" y="473" width="837" height="1" fill="#d8d8d8"/>
<rect x="0" y="460" width="11.5" height="12.5" fill="#d2d2d2"/>
<rect x="12" y="460" width="92.5" height="12" fill="#cecece"/>
<rect x="105" y="460" width="11.5" height="12.5" fill="#d2d2d2"/>
<polyline points="12.5,471.5 104,471.5 104,460" fill="none" stroke="#181818" stroke-width="1.2"/>
<line x1="11.7" y1="460" x2="11.7" y2="472" stroke="#f0f0f0" stroke-width="1"/>
<line x1="116.8" y1="460" x2="116.8" y2="472.5" stroke="#a8a8a8" stroke-width="1"/>
<polyline points="7.3,463.3 4,466.4 7.3,469.5" fill="none" stroke="#303030" stroke-width="1.1"/>
<polyline points="108.7,463.3 112,466.4 108.7,469.5" fill="none" stroke="#303030" stroke-width="1.1"/>
<text x="58.7" y="469.3" text-anchor="middle" font-family="Liberation Sans" font-size="9" fill="#141414">0 / 100</text>
<rect x="38.3" y="474" width="6" height="17" fill="#86abd0"/>
<rect x="40" y="474" width="2.6" height="17" fill="#a4c0dc"/>
<line x1="41.5" y1="474.5" x2="41.5" y2="483.5" stroke="#8c8c8c" stroke-width="1"/><line x1="49.5" y1="474.5" x2="49.5" y2="482.5" stroke="#8c8c8c" stroke-width="1"/><line x1="56.5" y1="474.5" x2="56.5" y2="482.5" stroke="#8c8c8c" stroke-width="1"/><line x1="64.5" y1="474.5" x2="64.5" y2="482.5" stroke="#8c8c8c" stroke-width="1"/><line x1="71.5" y1="474.5" x2="71.5" y2="482.5" stroke="#8c8c8c" stroke-width="1"/><line x1="79.5" y1="474.5" x2="79.5" y2="483.5" stroke="#8c8c8c" stroke-width="1"/><line x1="86.5" y1="474.5" x2="86.5" y2="482.5" stroke="#8c8c8c" stroke-width="1"/><line x1="94.5" y1="474.5" x2="94.5" y2="482.5" stroke="#8c8c8c" stroke-width="1"/><line x1="101.5" y1="474.5" x2="101.5" y2="482.5" stroke="#8c8c8c" stroke-width="1"/><line x1="109.5" y1="474.5" x2="109.5" y2="482.5" stroke="#8c8c8c" stroke-width="1"/><line x1="117.5" y1="474.5" x2="117.5" y2="483.5" stroke="#8c8c8c" stroke-width="1"/><line x1="124.5" y1="474.5" x2="124.5" y2="482.5" stroke="#8c8c8c" stroke-width="1"/><line x1="132.5" y1="474.5" x2="132.5" y2="482.5" stroke="#8c8c8c" stroke-width="1"/><line x1="139.5" y1="474.5" x2="139.5" y2="482.5" stroke="#8c8c8c" stroke-width="1"/><line x1="147.5" y1="474.5" x2="147.5" y2="482.5" stroke="#8c8c8c" stroke-width="1"/><line x1="154.5" y1="474.5" x2="154.5" y2="483.5" stroke="#8c8c8c" stroke-width="1"/><line x1="162.5" y1="474.5" x2="162.5" y2="482.5" stroke="#8c8c8c" stroke-width="1"/><line x1="169.5" y1="474.5" x2="169.5" y2="482.5" stroke="#8c8c8c" stroke-width="1"/><line x1="177.5" y1="474.5" x2="177.5" y2="482.5" stroke="#8c8c8c" stroke-width="1"/><line x1="184.5" y1="474.5" x2="184.5" y2="482.5" stroke="#8c8c8c" stroke-width="1"/><line x1="192.5" y1="474.5" x2="192.5" y2="483.5" stroke="#8c8c8c" stroke-width="1"/><line x1="199.5" y1="474.5" x2="199.5" y2="482.5" stroke="#8c8c8c" stroke-width="1"/><line x1="207.5" y1="474.5" x2="207.5" y2="482.5" stroke="#8c8c8c" stroke-width="1"/><line x1="215.5" y1="474.5" x2="215.5" y2="482.5" stroke="#8c8c8c" stroke-width="1"/><line x1="222.5" y1="474.5" x2="222.5" y2="482.5" stroke="#8c8c8c" stroke-width="1"/><line x1="230.5" y1="474.5" x2="230.5" y2="483.5" stroke="#8c8c8c" stroke-width="1"/><line x1="237.5" y1="474.5" x2="237.5" y2="482.5" stroke="#8c8c8c" stroke-width="1"/><line x1="245.5" y1="474.5" x2="245.5" y2="482.5" stroke="#8c8c8c" stroke-width="1"/><line x1="252.5" y1="474.5" x2="252.5" y2="482.5" stroke="#8c8c8c" stroke-width="1"/><line x1="260.5" y1="474.5" x2="260.5" y2="482.5" stroke="#8c8c8c" stroke-width="1"/><line x1="267.5" y1="474.5" x2="267.5" y2="483.5" stroke="#8c8c8c" stroke-width="1"/><line x1="275.5" y1="474.5" x2="275.5" y2="482.5" stroke="#8c8c8c" stroke-width="1"/><line x1="282.5" y1="474.5" x2="282.5" y2="482.5" stroke="#8c8c8c" stroke-width="1"/><line x1="290.5" y1="474.5" x2="290.5" y2="482.5" stroke="#8c8c8c" stroke-width="1"/><line x1="297.5" y1="474.5" x2="297.5" y2="482.5" stroke="#8c8c8c" stroke-width="1"/><line x1="305.5" y1="474.5" x2="305.5" y2="483.5" stroke="#8c8c8c" stroke-width="1"/><line x1="313.5" y1="474.5" x2="313.5" y2="482.5" stroke="#8c8c8c" stroke-width="1"/><line x1="320.5" y1="474.5" x2="320.5" y2="482.5" stroke="#8c8c8c" stroke-width="1"/><line x1="328.5" y1="474.5" x2="328.5" y2="482.5" stroke="#8c8c8c" stroke-width="1"/><line x1="335.5" y1="474.5" x2="335.5" y2="482.5" stroke="#8c8c8c" stroke-width="1"/><line x1="343.5" y1="474.5" x2="343.5" y2="483.5" stroke="#8c8c8c" stroke-width="1"/><line x1="350.5" y1="474.5" x2="350.5" y2="482.5" stroke="#8c8c8c" stroke-width="1"/><line x1="358.5" y1="474.5" x2="358.5" y2="482.5" stroke="#8c8c8c" stroke-width="1"/><line x1="365.5" y1="474.5" x2="365.5" y2="482.5" stroke="#8c8c8c" stroke-width="1"/><line x1="373.5" y1="474.5" x2="373.5" y2="482.5" stroke="#8c8c8c" stroke-width="1"/><line x1="380.5" y1="474.5" x2="380.5" y2="483.5" stroke="#8c8c8c" stroke-width="1"/><line x1="388.5" y1="474.5" x2="388.5" y2="482.5" stroke="#8c8c8c" stroke-width="1"/><line x1="396.5" y1="474.5" x2="396.5" y2="482.5" stroke="#8c8c8c" stroke-width="1"/><line x1="403.5" y1="474.5" x2="403.5" y2="482.5" stroke="#8c8c8c" stroke-width="1"/><line x1="411.5" y1="474.5" x2="411.5" y2="482.5" stroke="#8c8c8c" stroke-width="1"/><line x1="418.5" y1="474.5" x2="418.5" y2="483.5" stroke="#8c8c8c" stroke-width="1"/><line x1="426.5" y1="474.5" x2="426.5" y2="482.5" stroke="#8c8c8c" stroke-width="1"/><line x1="433.5" y1="474.5" x2="433.5" y2="482.5" stroke="#8c8c8c" stroke-width="1"/><line x1="441.5" y1="474.5" x2="441.5" y2="482.5" stroke="#8c8c8c" stroke-width="1"/><line x1="448.5" y1="474.5" x2="448.5" y2="482.5" stroke="#8c8c8c" stroke-width="1"/><line x1="456.5" y1="474.5" x2="456.5" y2="483.5" stroke="#8c8c8c" stroke-width="1"/><line x1="463.5" y1="474.5" x2="463.5" y2="482.5" stroke="#8c8c8c" stroke-width="1"/><line x1="471.5" y1="474.5" x2="471.5" y2="482.5" stroke="#8c8c8c" stroke-width="1"/><line x1="478.5" y1="474.5" x2="478.5" y2="482.5" stroke="#8c8c8c" stroke-width="1"/><line x1="486.5" y1="474.5" x2="486.5" y2="482.5" stroke="#8c8c8c" stroke-width="1"/><line x1="494.5" y1="474.5" x2="494.5" y2="483.5" stroke="#8c8c8c" stroke-width="1"/><line x1="501.5" y1="474.5" x2="501.5" y2="482.5" stroke="#8c8c8c" stroke-width="1"/><line x1="509.5" y1="474.5" x2="509.5" y2="482.5" stroke="#8c8c8c" stroke-width="1"/><line x1="516.5" y1="474.5" x2="516.5" y2="482.5" stroke="#8c8c8c" stroke-width="1"/><line x1="524.5" y1="474.5" x2="524.5" y2="482.5" stroke="#8c8c8c" stroke-width="1"/><line x1="531.5" y1="474.5" x2="531.5" y2="483.5" stroke="#8c8c8c" stroke-width="1"/><line x1="539.5" y1="474.5" x2="539.5" y2="482.5" stroke="#8c8c8c" stroke-width="1"/><line x1="546.5" y1="474.5" x2="546.5" y2="482.5" stroke="#8c8c8c" stroke-width="1"/><line x1="554.5" y1="474.5" x2="554.5" y2="482.5" stroke="#8c8c8c" stroke-width="1"/><line x1="561.5" y1="474.5" x2="561.5" y2="482.5" stroke="#8c8c8c" stroke-width="1"/><line x1="569.5" y1="474.5" x2="569.5" y2="483.5" stroke="#8c8c8c" stroke-width="1"/><line x1="577.5" y1="474.5" x2="577.5" y2="482.5" stroke="#8c8c8c" stroke-width="1"/><line x1="584.5" y1="474.5" x2="584.5" y2="482.5" stroke="#8c8c8c" stroke-width="1"/><line x1="592.5" y1="474.5" x2="592.5" y2="482.5" stroke="#8c8c8c" stroke-width="1"/><line x1="599.5" y1="474.5" x2="599.5" y2="482.5" stroke="#8c8c8c" stroke-width="1"/><line x1="607.5" y1="474.5" x2="607.5" y2="483.5" stroke="#8c8c8c" stroke-width="1"/><line x1="614.5" y1="474.5" x2="614.5" y2="482.5" stroke="#8c8c8c" stroke-width="1"/><line x1="622.5" y1="474.5" x2="622.5" y2="482.5" stroke="#8c8c8c" stroke-width="1"/><line x1="629.5" y1="474.5" x2="629.5" y2="482.5" stroke="#8c8c8c" stroke-width="1"/><line x1="637.5" y1="474.5" x2="637.5" y2="482.5" stroke="#8c8c8c" stroke-width="1"/><line x1="644.5" y1="474.5" x2="644.5" y2="483.5" stroke="#8c8c8c" stroke-width="1"/><line x1="652.5" y1="474.5" x2="652.5" y2="482.5" stroke="#8c8c8c" stroke-width="1"/><line x1="659.5" y1="474.5" x2="659.5" y2="482.5" stroke="#8c8c8c" stroke-width="1"/><line x1="667.5" y1="474.5" x2="667.5" y2="482.5" stroke="#8c8c8c" stroke-width="1"/><line x1="675.5" y1="474.5" x2="675.5" y2="482.5" stroke="#8c8c8c" stroke-width="1"/><line x1="682.5" y1="474.5" x2="682.5" y2="483.5" stroke="#8c8c8c" stroke-width="1"/><line x1="690.5" y1="474.5" x2="690.5" y2="482.5" stroke="#8c8c8c" stroke-width="1"/><line x1="697.5" y1="474.5" x2="697.5" y2="482.5" stroke="#8c8c8c" stroke-width="1"/><line x1="705.5" y1="474.5" x2="705.5" y2="482.5" stroke="#8c8c8c" stroke-width="1"/><line x1="712.5" y1="474.5" x2="712.5" y2="482.5" stroke="#8c8c8c" stroke-width="1"/><line x1="720.5" y1="474.5" x2="720.5" y2="483.5" stroke="#8c8c8c" stroke-width="1"/><line x1="727.5" y1="474.5" x2="727.5" y2="482.5" stroke="#8c8c8c" stroke-width="1"/><line x1="735.5" y1="474.5" x2="735.5" y2="482.5" stroke="#8c8c8c" stroke-width="1"/><line x1="742.5" y1="474.5" x2="742.5" y2="482.5" stroke="#8c8c8c" stroke-width="1"/><line x1="750.5" y1="474.5" x2="750.5" y2="482.5" stroke="#8c8c8c" stroke-width="1"/><line x1="757.5" y1="474.5" x2="757.5" y2="483.5" stroke="#8c8c8c" stroke-width="1"/><line x1="765.5" y1="474.5" x2="765.5" y2="482.5" stroke="#8c8c8c" stroke-width="1"/><line x1="773.5" y1="474.5" x2="773.5" y2="482.5" stroke="#8c8c8c" stroke-width="1"/><line x1="780.5" y1="474.5" x2="780.5" y2="482.5" stroke="#8c8c8c" stroke-width="1"/><line x1="788.5" y1="474.5" x2="788.5" y2="482.5" stroke="#8c8c8c" stroke-width="1"/><line x1="795.5" y1="474.5" x2="795.5" y2="483.5" stroke="#8c8c8c" stroke-width="1"/><line x1="803.5" y1="474.5" x2="803.5" y2="482.5" stroke="#8c8c8c" stroke-width="1"/><line x1="810.5" y1="474.5" x2="810.5" y2="482.5" stroke="#8c8c8c" stroke-width="1"/><line x1="818.5" y1="474.5" x2="818.5" y2="482.5" stroke="#8c8c8c" stroke-width="1"/>
<g font-family="Liberation Sans" font-size="9.8" fill="#181818"><text x="41.6" y="492.2" text-anchor="middle">0</text><text x="79.3" y="492.2" text-anchor="middle">5</text><text x="117.0" y="492.2" text-anchor="middle">10</text><text x="154.7" y="492.2" text-anchor="middle">15</text><text x="192.4" y="492.2" text-anchor="middle">20</text><text x="230.1" y="492.2" text-anchor="middle">25</text><text x="267.8" y="492.2" text-anchor="middle">30</text><text x="305.5" y="492.2" text-anchor="middle">35</text><text x="343.2" y="492.2" text-anchor="middle">40</text><text x="380.9" y="492.2" text-anchor="middle">45</text><text x="418.7" y="492.2" text-anchor="middle">50</text><text x="456.4" y="492.2" text-anchor="middle">55</text><text x="494.1" y="492.2" text-anchor="middle">60</text><text x="531.8" y="492.2" text-anchor="middle">65</text><text x="569.5" y="492.2" text-anchor="middle">70</text><text x="607.2" y="492.2" text-anchor="middle">75</text><text x="644.9" y="492.2" text-anchor="middle">80</text><text x="682.6" y="492.2" text-anchor="middle">85</text><text x="720.3" y="492.2" text-anchor="middle">90</text><text x="758.0" y="492.2" text-anchor="middle">95</text><text x="795.7" y="492.2" text-anchor="middle">100</text></g>
<g fill="#181818">
<rect x="9.8" y="477.2" width="12.6" height="3.2" rx="1"/>
<rect x="11" y="478" width="10" height="1.2" fill="#d8d8d8"/>
<rect x="9.8" y="487.3" width="12.6" height="2.6" rx="1"/>
<path d="M12.7,481.6 l2,2 h-1.4 v2.2 h-1.2 v-2.2 h-1.4z M19.5,485.8 l2,-2 h-1.4 v-2.2 h-1.2 v2.2 h-1.4z"/>
</g>
</svg>

<svg class="a" style="left:0;top:0" width="1000" height="491" viewBox="0 0 1000 491" font-family="Liberation Sans">
<defs><clipPath id="wmc"><rect x="836.5" y="380" width="164" height="111"/></clipPath></defs>
<g clip-path="url(#wmc)" opacity="0.9">
<g fill="#ffffff">
<ellipse cx="847" cy="391" rx="5.6" ry="6.6" transform="rotate(-12 847 391)"/>
<ellipse cx="862.2" cy="393.7" rx="6.2" ry="7.3" transform="rotate(10 862.2 393.7)"/>
<ellipse cx="839.6" cy="410.6" rx="5" ry="8.8" transform="rotate(-14 839.6 410.6)"/>
<ellipse cx="872.8" cy="408.4" rx="5.2" ry="9" transform="rotate(14 872.8 408.4)"/>
<path d="M855,409.5 q8,0 13,8 q7,9 6.5,16 q-1,9 -10,9.5 q-5,0 -9.5,-1.6 q-4.5,1.6 -9.500,1.600 q-9,-0.5 -10,-9.500 q-0.500,-7 6.500,-16 q5,-8 13,-8z"/>
</g>
<text x="850.6" y="433" font-size="23" font-weight="bold" fill="#c8c8c8" textLength="16.6" lengthAdjust="spacingAndGlyphs">du</text>
<g fill="none" stroke="#ffffff" stroke-width="3.1" stroke-linejoin="miter">
<polyline points="891.4,412.8 885.2,421.4 892,421.4 884.6,430 893.4,430"/>
<line x1="883" y1="437.6" x2="893.6" y2="436.2"/>
<polyline points="896,415 909.4,415 896.4,425.6"/>
<line x1="899.6" y1="418.4" x2="910.6" y2="425.6"/>
<line x1="897" y1="428.6" x2="909.6" y2="428.6"/>
<line x1="903.2" y1="428.6" x2="903.2" y2="438"/>
<line x1="895" y1="438" x2="911" y2="438"/>
<polyline points="913,414.2 922.2,414.2 921.4,424.2"/>
<line x1="915.4" y1="414.2" x2="914.4" y2="424.2"/>
<polyline points="913.4,424.2 924,424.2 923.2,437.6 919,437.6"/>
<line x1="912.4" y1="431" x2="920.4" y2="431"/>
<polyline points="926,419.4 933.4,412.6 941.2,419.4"/>
<line x1="929" y1="421.6" x2="938" y2="421.6"/>
<line x1="928.6" y1="425" x2="930" y2="432.6"/>
<line x1="933.6" y1="424.6" x2="933.6" y2="432.6"/>
<line x1="938.4" y1="425" x2="936.6" y2="432.6"/>
<line x1="925.4" y1="437.6" x2="941.4" y2="437.6"/>
</g>
<text x="944" y="463" font-size="20.2" fill="#ffffff" text-anchor="end" textLength="111.2" lengthAdjust="spacingAndGlyphs">n.baidu.com</text>
</g>
</svg>
</body></html>
